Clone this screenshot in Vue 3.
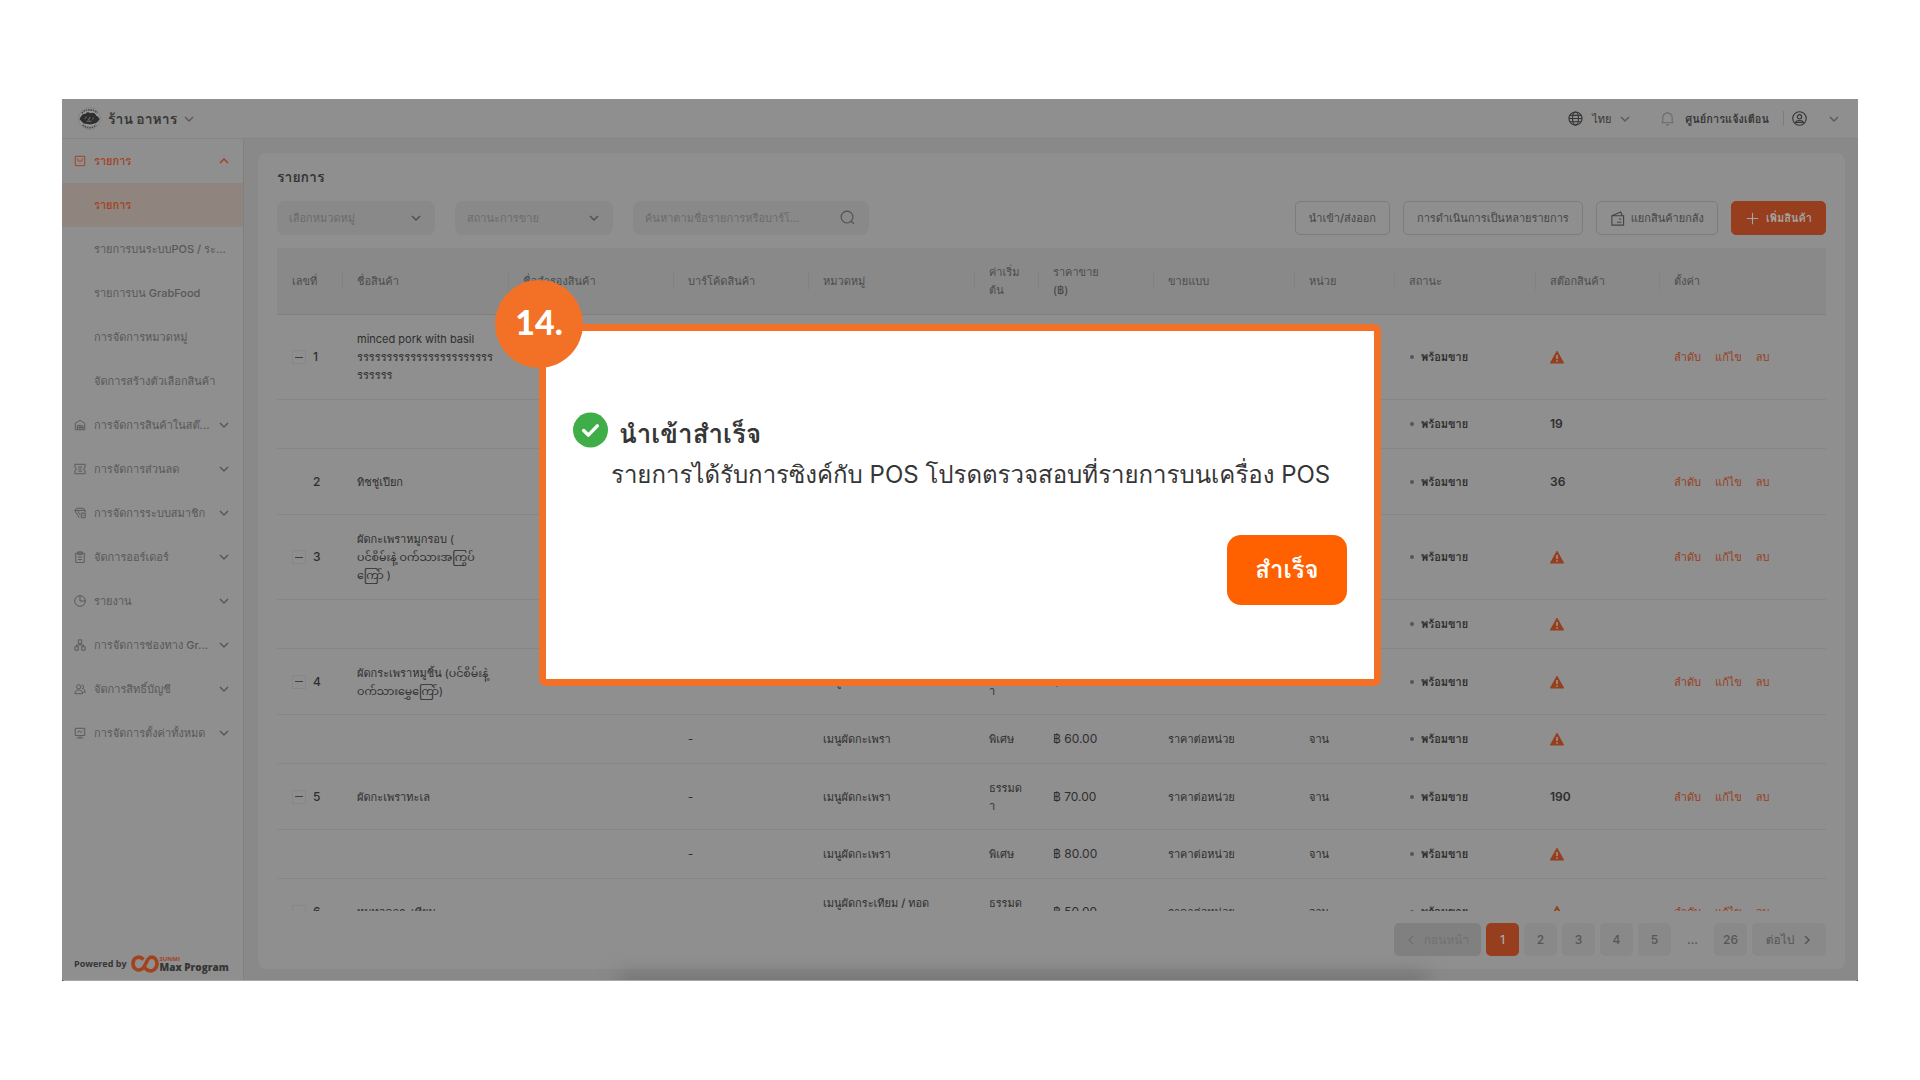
<template>
  <div class="page">
    <div class="window">
      <div class="app">
        <!-- Top bar -->
        <header class="top-bar">
          <button class="shop" type="button">
            <svg class="shop-logo" viewBox="0 0 24 24">
              <circle cx="12" cy="12" r="11.3" fill="#959595" stroke="#7a7a7a" stroke-width=".7" />
              <path d="M4 6.500C7 1.800 17 1.800 20 6.500" fill="none" stroke="#4a4a4a" stroke-width="1.700" stroke-dasharray="1.7 .8" />
              <path d="M5 18.500C8.500 22.600 15.500 22.600 19 18.500" fill="none" stroke="#4a4a4a" stroke-width="1.700" stroke-dasharray="1.7 .8" />
              <path d="M1.500 12.500C3 10 4.500 6.500 8 7c1.500-2 3.500-1.800 4.500-.5C15 5 18.500 6.500 19 9c2 .5 3 2 3.500 4-1.500 1-2 4-5 4-2 1.500-7 1.500-9 .5-3 .5-4.500-2.500-7-5z" fill="#2e2e2e" />
              <path d="M7 12.500l2-2.500M11 13.500l1.500-3M15 13l1.500-2M9 14.800h5" stroke="#8f8f8f" stroke-width=".8" fill="none" />
            </svg>
            <span>ร้าน อาหาร</span>
            <svg class="chevron" viewBox="0 0 10 10"><path d="M1 3l4 4 4-4" /></svg>
          </button>
          <div class="top-actions">
            <button class="language" type="button">
              <svg class="line-icon" viewBox="0 0 16 16">
                <circle cx="8" cy="8" r="7" />
                <ellipse cx="8" cy="8" rx="3.200" ry="7" />
                <path d="M1 8h14M2 4.600h12M2 11.400h12" />
              </svg>
              <span>ไทย</span>
              <svg class="chevron" viewBox="0 0 10 10"><path d="M1 3l4 4 4-4" /></svg>
            </button>
            <button class="notices" type="button">
              <svg class="line-icon" viewBox="0 0 16 16">
                <path d="M1.500 12.500h13M3 12.500V7a5 5 0 0 1 10 0v5.500M8 2V.8M6.500 14.800h3" />
              </svg>
              <span>ศูนย์การแจ้งเตือน</span>
            </button>
            <button class="account" type="button" aria-label="บัญชี">
              <svg class="line-icon" viewBox="0 0 16 16">
                <circle cx="8" cy="8" r="7.200" />
                <circle cx="8" cy="6.200" r="2.300" />
                <path d="M3.800 12.200c1-2.600 7.400-2.600 8.400 0z" />
              </svg>
              <svg class="chevron" viewBox="0 0 10 10"><path d="M1 3l4 4 4-4" /></svg>
            </button>
          </div>
        </header>

        <div class="body">
          <!-- Side menu -->
          <aside class="sidebar">
            <nav>
              <a
                v-for="item in menu"
                :key="item.id"
                href="#"
                class="menu-item"
                :class="{ open: item.open, active: item.active }"
              >
                <svg v-if="item.icon" class="menu-icon" viewBox="0 0 14 14"><path :d="item.icon" /></svg>
                <span class="menu-label">{{ item.label }}</span>
                <svg v-if="item.icon" class="chevron" viewBox="0 0 10 10">
                  <path :d="item.open ? 'M1 7l4-4 4 4' : 'M1 3l4 4 4-4'" />
                </svg>
              </a>
            </nav>
            <div class="powered">
              <span>Powered by</span>
              <svg class="brand-mark" viewBox="0 0 28 20">
                <path d="M12.500 5.500C8 .8 2 4 2 9.500S7 17.500 11 15c4-2.500 4-9.500 8-11.500 4-1.500 7.200 2 7 6.500-.2 5-4.500 7.800-8.500 6.500-2.500-.8-3.500-2.500-4.500-4" />
              </svg>
              <span class="brand">
                <span class="brand-top">SUNMI</span>
                <span class="brand-name">Max Program</span>
              </span>
            </div>
          </aside>

          <!-- Product list -->
          <main class="main">
            <section class="card">
              <h1>รายการ</h1>
              <div class="toolbar">
                <label class="select-box">
                  <select aria-label="เลือกหมวดหมู่">
                    <option>เลือกหมวดหมู่</option>
                  </select>
                  <svg class="chevron" viewBox="0 0 10 10"><path d="M1 3l4 4 4-4" /></svg>
                </label>
                <label class="select-box">
                  <select aria-label="สถานะการขาย">
                    <option>สถานะการขาย</option>
                  </select>
                  <svg class="chevron" viewBox="0 0 10 10"><path d="M1 3l4 4 4-4" /></svg>
                </label>
                <label class="search-box">
                  <input type="text" aria-label="ค้นหา" placeholder="ค้นหาตามชื่อรายการหรือบาร์โ..." />
                  <svg class="line-icon" viewBox="0 0 16 16"><circle cx="7.500" cy="7.500" r="6.300" /><path d="M12 12l2.800 2.800" /></svg>
                </label>
                <div class="buttons">
                  <button type="button">นำเข้า/ส่งออก</button>
                  <button type="button">การดำเนินการเป็นหลายรายการ</button>
                  <button type="button">
                    <svg class="line-icon" viewBox="0 0 16 16">
                      <path d="M2 5h12.500v10H2zM2 5l9.500-4L13 5M9.500 8.500H12M7.500 12H12" />
                    </svg>
                    แยกสินค้ายกลัง
                  </button>
                  <button type="button" class="primary">
                    <svg class="line-icon" viewBox="0 0 16 16"><path d="M8 2v12M2 8h12" /></svg>
                    เพิ่มสินค้า
                  </button>
                </div>
              </div>

              <div class="table-wrap">
                <table>
                  <thead>
                    <tr>
                      <th v-for="head in columns" :key="head">{{ head }}</th>
                    </tr>
                  </thead>
                  <tbody>
                    <tr v-for="(row, i) in rows" :key="i" :class="row.size">
                      <td>
                        <div v-if="row.no" class="number">
                          <span class="fold" :class="{ empty: !row.fold }"></span>
                          <span>{{ row.no }}</span>
                        </div>
                      </td>
                      <td class="lines name">{{ row.name }}</td>
                      <td></td>
                      <td>{{ row.barcode }}</td>
                      <td class="lines">{{ row.category }}</td>
                      <td class="lines">{{ row.tier }}</td>
                      <td class="price">{{ row.price }}</td>
                      <td>{{ row.method }}</td>
                      <td>{{ row.unit }}</td>
                      <td><span class="status">พร้อมขาย</span></td>
                      <td class="stock">
                        <template v-if="row.stock">{{ row.stock }}</template>
                        <svg v-else class="warning" viewBox="0 0 14 14">
                          <path d="M7 1.200L13.600 13H.4z" fill="#963e1e" stroke="#963e1e" stroke-linejoin="round" />
                          <path d="M7 5v4M7 10.200v1.500" stroke="#999" stroke-width="1.500" />
                        </svg>
                      </td>
                      <td>
                        <div v-if="row.no" class="links">
                          <a href="#">ลำดับ</a>
                          <a href="#">แก้ไข</a>
                          <a href="#">ลบ</a>
                        </div>
                      </td>
                    </tr>
                  </tbody>
                </table>
              </div>

              <div class="pagination">
                <button class="prev" type="button" disabled>
                  <svg class="chevron" viewBox="0 0 10 10"><path d="M7 1L3 5l4 4" /></svg>
                  ก่อนหน้า
                </button>
                <template v-for="p in pages" :key="p">
                  <span v-if="p === '...'">...</span>
                  <button v-else type="button" :class="{ current: p === currentPage }" @click="currentPage = p">{{ p }}</button>
                </template>
                <button class="next" type="button">
                  ต่อไป
                  <svg class="chevron" viewBox="0 0 10 10"><path d="M3 1l4 4-4 4" /></svg>
                </button>
              </div>
            </section>
          </main>
        </div>
        <div class="bottom-shade"></div>
      </div>
    </div>

    <!-- Import result dialog with its step badge -->
    <div v-if="dialogOpen" class="dialog-layer">
      <div class="dialog" role="dialog">
        <div class="step">14.</div>
        <div class="message">
          <svg class="success" viewBox="0 0 36 36">
            <circle cx="18" cy="18" r="18" fill="#3fae49" />
            <path d="M11 18.500l4.800 4.800L25 13.800" fill="none" stroke="#fff" stroke-width="3.500" stroke-linecap="round" stroke-linejoin="round" />
          </svg>
          <div>
            <h2>นำเข้าสำเร็จ</h2>
            <p>รายการได้รับการซิงค์กับ POS โปรดตรวจสอบที่รายการบนเครื่อง POS</p>
          </div>
        </div>
        <button class="done" type="button" @click="dialogOpen = false">สำเร็จ</button>
      </div>
    </div>
  </div>
</template>

<script setup>
import { ref } from 'vue';

const dialogOpen = ref(true);
const currentPage = ref('1');
const pages = ['1', '2', '3', '4', '5', '...', '26'];

// Side menu entries, the ones without an icon belong to the open group
const menu = [
  { id: 1, label: 'รายการ', open: true, icon: 'M1.500 1.500h11v11h-11zM4.500 4v1.500a2.500 2 0 0 0 5 0V4' },
  { id: 2, label: 'รายการ', active: true },
  { id: 3, label: 'รายการบนระบบPOS / ระ...' },
  { id: 4, label: 'รายการบน GrabFood' },
  { id: 5, label: 'การจัดการหมวดหมู่' },
  { id: 6, label: 'จัดการสร้างตัวเลือกสินค้า' },
  { id: 7, label: 'การจัดการสินค้าในสต๊...', icon: 'M1.500 5L7 1.500 12.500 5v7.500h-11zM4 12.500v-5h3v5M4 10h6.500v2.500M7 8h3.500v2' },
  { id: 8, label: 'การจัดการส่วนลด', icon: 'M1 1.500h12V5l-1.500 1v2L13 9v3.500H1V9l1.500-1V6L1 5zM5 4.500h4.500M5 7h3.500M5 9.500h4.500' },
  { id: 9, label: 'การจัดการระบบสมาชิก', icon: 'M1 4l2-2.500h8L13 4v2M1 4h12M1 4l5 8.500M4.500 4l2 5M8.500 7h4.500v5.500H8.500zM10 9.500h1.500' },
  { id: 10, label: 'จัดการออร์เดอร์', icon: 'M2 2.500h10v11H2zM4.500 1h5v3h-5zM4.500 7h5M4.500 10h5' },
  { id: 11, label: 'รายงาน', icon: 'M7 .8a6.200 6.200 0 1 0 0 12.400A6.200 6.200 0 0 0 7 .8zM7 1v6h6' },
  { id: 12, label: 'การจัดการช่องทาง Gr...', icon: 'M5 1h4v4H5zM1 9h4v4H1zM9 9h4v4H9zM7 5v2M3 9V7h8v2' },
  { id: 13, label: 'จัดการสิทธิ์บัญชี', icon: 'M5.500 2a2.500 2.500 0 1 0 0 5 2.500 2.500 0 0 0 0-5zM1 12.500c0-6 9-6 9 0zM9 2.500a2 2 0 1 1 .5 4c2 0 3.500 2 3.500 4.500H11' },
  { id: 14, label: 'การจัดการตั้งค่าทั้งหมด', icon: 'M1.500 1.500h11v8.500h-11zM7 10v2.500M3.500 12.800h7M4 6.500l2-2 2 2 2-2' },
];

const columns = [
  'เลขที่', 'ชื่อสินค้า', 'ชื่อสำรองสินค้า', 'บาร์โค้ดสินค้า', 'หมวดหมู่', 'ค่าเริ่ม\nต้น',
  'ราคาขาย\n(฿)', 'ขายแบบ', 'หน่วย', 'สถานะ', 'สต๊อกสินค้า', 'ตั้งค่า',
];

const rows = [
  { no: 1, fold: true, size: 'tall', name: 'minced pork with basil\nรรรรรรรรรรรรรรรรรรรรรรร\nรรรรรร' },
  { size: 'short', stock: 19 },
  { no: 2, size: 'medium', name: 'ทิชชู่เปียก', stock: 36 },
  { no: 3, fold: true, size: 'tall', name: 'ผัดกะเพราหมูกรอบ (\nပင်စိမ်းနဲ့ ဝက်သားအကြွပ်\nကြော် )' },
  { size: 'short' },
  { no: 4, fold: true, size: 'medium', name: 'ผัดกระเพราหมูชิ้น (ပင်စိမ်းနဲ့\nဝက်သားမွှေကြော်)', category: 'เมนูผัดกะเพรา', tier: 'ธรรมด\nา', price: '฿ 50.00' },
  { size: 'short', barcode: '-', category: 'เมนูผัดกะเพรา', tier: 'พิเศษ', price: '฿ 60.00', method: 'ราคาต่อหน่วย', unit: 'จาน' },
  { no: 5, fold: true, size: 'medium', name: 'ผัดกะเพราทะเล', barcode: '-', category: 'เมนูผัดกะเพรา', tier: 'ธรรมด\nา', price: '฿ 70.00', method: 'ราคาต่อหน่วย', unit: 'จาน', stock: 190 },
  { size: 'short', barcode: '-', category: 'เมนูผัดกะเพรา', tier: 'พิเศษ', price: '฿ 80.00', method: 'ราคาต่อหน่วย', unit: 'จาน' },
  { no: 6, fold: true, size: 'medium', name: 'หมูทอดกระเทียม', category: 'เมนูผัดกระเทียม / ทอด\nกระเทียม', tier: 'ธรรมด\nา', price: '฿ 50.00', method: 'ราคาต่อหน่วย', unit: 'จาน' },
];
</script>

<style>
body {
  margin: 0;
  background: #fff;
}
</style>

<style scoped>
.page {
  position: relative;
  box-sizing: border-box;
  height: 100vh;
  padding: 99px 62px;
  font-family: Inter, Loma, 'Noto Sans Thai Looped', 'Noto Sans Myanmar', sans-serif;
  font-size: 11px;
  line-height: 18px;
  color: #363636;
}

button, select, input {
  font: inherit;
  color: inherit;
  margin: 0;
}
button {
  cursor: pointer;
}
a {
  color: inherit;
  text-decoration: none;
}

.window {
  height: 100%;
  background: #444;
}
.app {
  position: relative;
  box-sizing: border-box;
  height: 100%;
  display: flex;
  flex-direction: column;
  overflow: hidden;
  background: #8f8f8f;
  border-bottom: 1px solid #a8a8a8;
  border-radius: 0 0 3px 3px;
}

/* --- Icons --- */
.chevron {
  width: 10px;
  height: 10px;
  flex-shrink: 0;
  fill: none;
  stroke: currentColor;
  stroke-width: 1.5;
}
.line-icon {
  width: 15px;
  height: 15px;
  flex-shrink: 0;
  fill: none;
  stroke: currentColor;
  stroke-width: 1.2;
}

/* --- Top bar --- */
.top-bar {
  height: 39px;
  flex-shrink: 0;
  display: flex;
  align-items: center;
  justify-content: space-between;
  padding: 0 19px 0 16px;
  border-bottom: 1px solid #858585;
}
.top-bar button {
  display: flex;
  align-items: center;
  padding: 0;
  border: 0;
  background: none;
}
.top-bar .chevron {
  color: #5c5c5c;
}
.top-bar .shop {
  gap: 7px;
  font-size: 14px;
  font-weight: 700;
}
.shop-logo {
  width: 23px;
  height: 23px;
}
.top-actions {
  display: flex;
  align-items: center;
}
.language {
  gap: 9px;
  margin-right: 30px;
}
.top-bar .notices {
  gap: 10px;
  padding-right: 14px;
  font-weight: 600;
}
.notices .line-icon {
  color: #6b6b6b;
}
.top-bar .account {
  gap: 22px;
  padding-left: 8px;
  border-left: 1px solid #7d7d7d;
}

/* --- Side menu --- */
.body {
  flex: 1;
  min-height: 0;
  display: flex;
}
.sidebar {
  width: 181px;
  flex-shrink: 0;
  display: flex;
  flex-direction: column;
  justify-content: space-between;
  border-right: 1px solid #808080;
}
.menu-item {
  height: 44px;
  display: flex;
  align-items: center;
  padding: 0 14px 0 32px;
  font-weight: 500;
  color: #585858;
}
.menu-item:has(.menu-icon) {
  padding-left: 12px;
}
.menu-item.open,
.menu-item.active {
  color: #a3421f;
  font-weight: 600;
}
.menu-item.active {
  background: #90857e;
}
.menu-icon {
  width: 12px;
  height: 12px;
  margin-right: 8px;
  flex-shrink: 0;
  fill: none;
  stroke: currentColor;
  stroke-width: 1.1;
}
.menu-label {
  flex: 1;
  white-space: nowrap;
}
.powered {
  display: flex;
  align-items: center;
  gap: 4px;
  height: 32px;
  padding-left: 12px;
  font-family: 'Open Sans', sans-serif;
  font-size: 9px;
  font-weight: 700;
}
.brand-mark {
  width: 28px;
  height: 20px;
  fill: none;
  stroke: #a3421f;
  stroke-width: 3.6;
}
.brand {
  display: flex;
  flex-direction: column;
  margin-left: -3px;
}
.brand-top {
  font-size: 6px;
  line-height: 6px;
  color: #a3421f;
}
.brand-name {
  font-size: 10px;
  font-weight: 800;
  line-height: 10px;
}

/* --- Content card --- */
.main {
  flex: 1;
  min-width: 0;
  display: flex;
  padding: 14px 13px 11px 14px;
  background: #898989;
}
.card {
  flex: 1;
  min-width: 0;
  display: flex;
  flex-direction: column;
  padding: 14px 19px 13px;
  background: #8f8f8f;
  border-radius: 8px;
}
h1 {
  margin: 0 0 14px;
  font-size: 14px;
  line-height: 20px;
  font-weight: 700;
}
.toolbar {
  display: flex;
  gap: 20px;
  margin-bottom: 13px;
}
.select-box,
.search-box {
  position: relative;
  width: 158px;
  height: 34px;
}
.search-box {
  width: 236px;
}
.select-box select,
.search-box input {
  box-sizing: border-box;
  width: 100%;
  height: 100%;
  padding: 0 44px 0 12px;
  border: 0;
  border-radius: 8px;
  background: #898989;
  color: #6b6b6b;
  appearance: none;
}
.search-box input::placeholder {
  color: #6b6b6b;
}
.select-box .chevron,
.search-box .line-icon {
  position: absolute;
  top: 12px;
  right: 14px;
  color: #505050;
  pointer-events: none;
}
.search-box .line-icon {
  top: 9px;
}
.buttons {
  display: flex;
  gap: 13px;
  margin-left: auto;
}
.buttons button {
  display: flex;
  align-items: center;
  gap: 6px;
  height: 34px;
  padding: 0 13px;
  border: 1px solid #7c7c7c;
  border-radius: 5px;
  background: none;
  color: #454545;
  font-weight: 500;
  white-space: nowrap;
}
.buttons .primary {
  border-color: #963e1e;
  background: #963e1e;
  color: #a5a5a5;
  font-weight: 600;
}

/* --- Table --- */
.table-wrap {
  flex: 1;
  min-height: 0;
  overflow: hidden;
}
table {
  width: 100%;
  table-layout: fixed;
  border-collapse: separate;
  border-spacing: 0;
}
th {
  position: relative;
  box-sizing: border-box;
  height: 67px;
  padding: 0 0 0 15px;
  background: #898989;
  border-bottom: 1px solid #808080;
  color: #4c4c4c;
  font-weight: 500;
  text-align: left;
  white-space: pre;
}
th + th::before {
  content: '';
  position: absolute;
  left: 0;
  top: 25px;
  height: 17px;
  border-left: 1px dotted #7b7b7b;
}
th:nth-child(1) { width: 65px; }
th:nth-child(2) { width: 166px; }
th:nth-child(3) { width: 165px; }
th:nth-child(4) { width: 135px; }
th:nth-child(5) { width: 166px; }
th:nth-child(6) { width: 64px; }
th:nth-child(7) { width: 115px; }
th:nth-child(8) { width: 141px; }
th:nth-child(9) { width: 100px; }
th:nth-child(10) { width: 141px; }
th:nth-child(11) { width: 124px; }
th:nth-child(12) { width: 167px; }
td {
  box-sizing: border-box;
  height: 49px;
  padding: 0 0 0 15px;
  border-bottom: 1px solid #868686;
  font-weight: 500;
  color: #2e2e2e;
  white-space: nowrap;
}
.medium td { height: 66px; }
.tall td { height: 85px; }
.lines {
  white-space: pre;
}
.name {
  font-weight: 400;
}
.number {
  display: flex;
  align-items: center;
  gap: 7px;
  font-size: 12px;
}
.fold {
  box-sizing: border-box;
  width: 14px;
  height: 14px;
  display: flex;
  align-items: center;
  justify-content: center;
  border: 1px solid #878787;
}
.fold::before {
  content: '';
  width: 8px;
  height: 1px;
  background: #404040;
}
.fold.empty {
  visibility: hidden;
}
.price {
  font-size: 12px;
  font-weight: 400;
}
.status {
  display: flex;
  align-items: center;
  gap: 7px;
  font-weight: 600;
}
.status::before {
  content: '';
  width: 4px;
  height: 4px;
  margin-left: 1px;
  border-radius: 50%;
  background: #555;
}
.stock {
  font-size: 12px;
  font-weight: 600;
}
.warning {
  display: block;
  width: 14px;
  height: 14px;
}
.links {
  display: flex;
  gap: 14px;
  color: #963e1e;
  font-weight: 500;
}

/* --- Pagination --- */
.pagination {
  display: flex;
  justify-content: flex-end;
  gap: 5px;
  margin-top: 12px;
  font-size: 12px;
  font-weight: 500;
  color: #565656;
}
.pagination button,
.pagination > span {
  display: flex;
  align-items: center;
  justify-content: center;
  width: 33px;
  height: 33px;
  padding: 0;
  border: 0;
  border-radius: 5px;
  background: #898989;
}
.pagination > span {
  background: none;
}
.pagination .current {
  background: #963e1e;
  color: #aaa;
}
.pagination .prev {
  width: 87px;
  gap: 8px;
  background: #808080;
  color: #717171;
}
.pagination .next {
  width: 74px;
  gap: 8px;
}

/* Soft shade along the lower edge of the window */
.bottom-shade {
  position: absolute;
  left: 31%;
  right: 24%;
  bottom: -20px;
  height: 26px;
  background: #727272;
  filter: blur(10px);
}

/* --- Dialog --- */
.dialog-layer {
  position: absolute;
  inset: 0;
  display: flex;
  align-items: flex-start;
  justify-content: center;
  padding-top: 324px;
}
.dialog {
  position: relative;
  box-sizing: border-box;
  width: 842px;
  padding: 81px 27px 74px;
  border: 7px solid #f37027;
  border-radius: 7px;
  background: #fff;
  display: flex;
  flex-direction: column;
}
.step {
  position: absolute;
  left: -51px;
  top: -51px;
  width: 88px;
  height: 88px;
  border-radius: 50%;
  background: #f37027;
  color: #fff;
  font-family: Lato, sans-serif;
  font-size: 34px;
  font-weight: 900;
  line-height: 84px;
  text-align: center;
}
.message {
  display: flex;
  gap: 3px;
}
.success {
  width: 35px;
  height: 36px;
  flex-shrink: 0;
}
h2 {
  margin: 0;
  padding-left: 8px;
  font-size: 26px;
  font-weight: 700;
  line-height: 43px;
}
p {
  margin: 0;
  font-size: 24px;
  line-height: 40px;
  white-space: nowrap;
}
.done {
  align-self: flex-end;
  width: 120px;
  height: 70px;
  margin-top: 40px;
  border: 0;
  border-radius: 14px;
  background: #ff6000;
  color: #fff;
  font-size: 24px;
  font-weight: 700;
}
</style>
